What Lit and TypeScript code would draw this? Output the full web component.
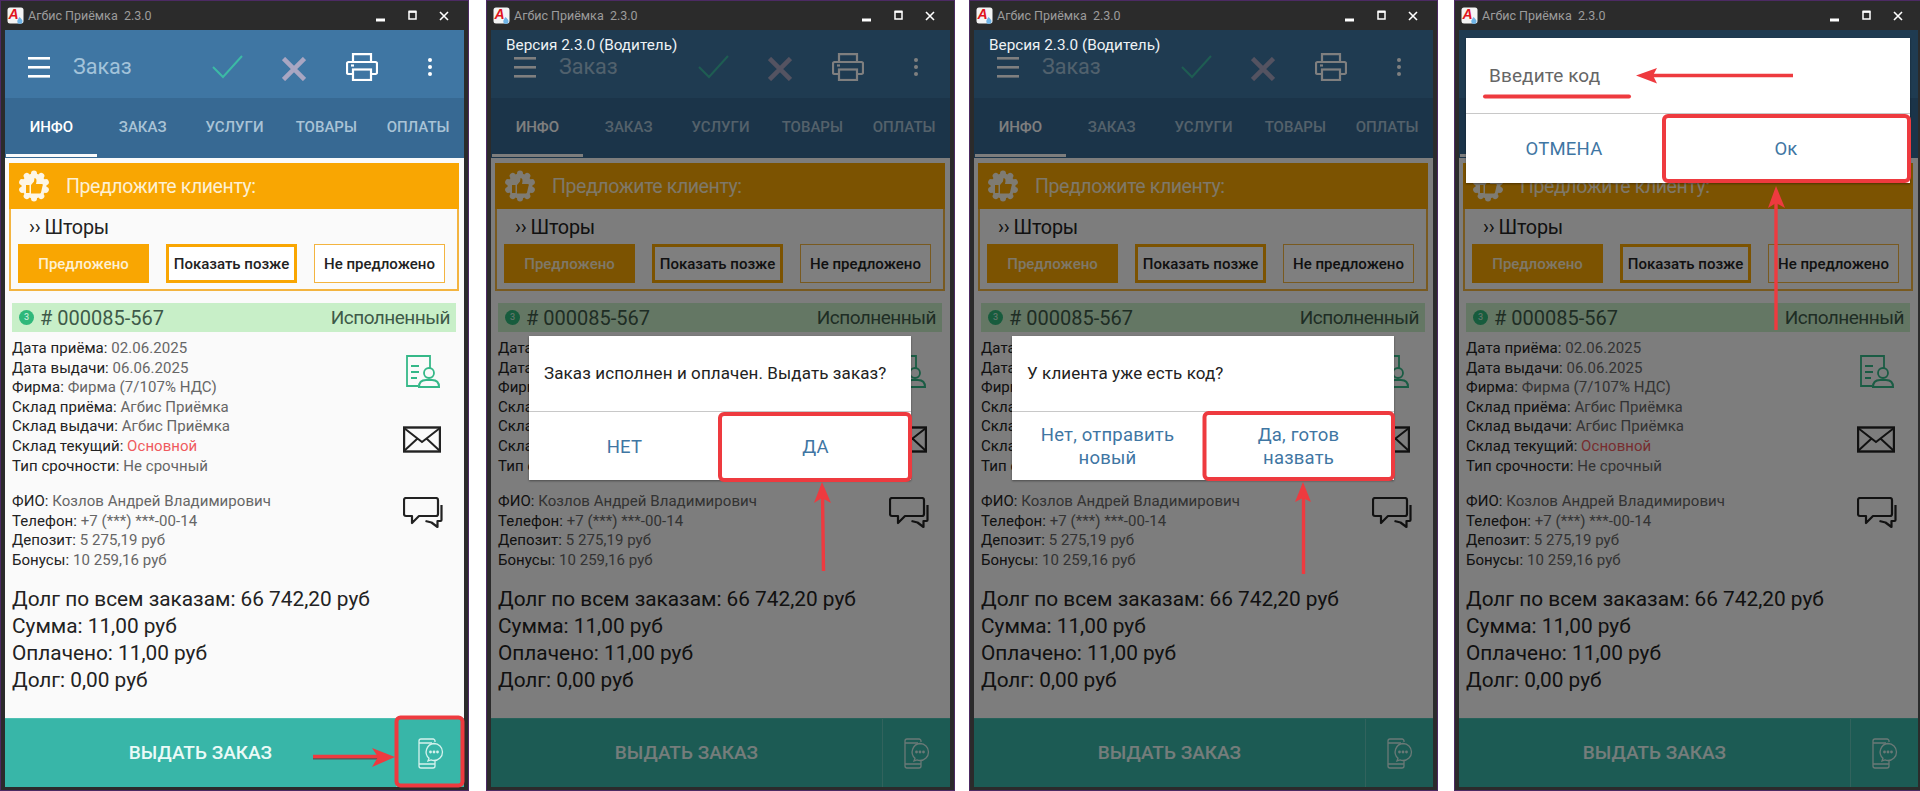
import { LitElement, html, css, svg, nothing } from "lit";
import { customElement, property } from "lit/decorators.js";

const RED = "#ee3a3f";
const frame = (x: number, y: number, w: number, h: number) =>
  svg`<rect x=${x} y=${y} width=${w} height=${h} rx="4" fill="none" stroke=${RED} stroke-width="4"/>`;
const shaft = (x1: number, y1: number, x2: number, y2: number) =>
  svg`<line x1=${x1} y1=${y1} x2=${x2} y2=${y2} stroke=${RED} stroke-width="3.4"/>`;
const head = (pts: string) => svg`<polygon points=${pts} fill=${RED}/>`;

const ANNOTATIONS: Record<string, unknown> = {
  a: svg`${frame(396.5, 717.5, 66, 68)}
    <line x1="313" y1="758" x2="380" y2="758" stroke="#555" stroke-width="3"/>
    ${shaft(313, 756.5, 380, 756.5)}${head("395,757 372,748 378,757 372,767")}`,
  b: svg`${frame(234, 414, 190, 66)}
    ${shaft(337.5, 571, 336.5, 495)}${head("336,482 328,503 336,498 345,503")}`,
  c: svg`${frame(235.5, 413, 188.5, 66)}
    ${shaft(334.5, 574, 334.5, 495)}${head("334,482 326,502 334,498 342,502")}`,
  d: svg`${frame(210, 116, 245, 65)}
    ${shaft(322, 330, 322, 200)}${head("322,186 314,208 322,203 331,208")}
    ${shaft(339, 75.5, 198, 75.5)}${head("182,75.5 203,68 199,75.5 203,83.5")}
    <line x1="31" y1="96.5" x2="175" y2="96.5" stroke=${RED} stroke-width="4" stroke-linecap="round"/>`,
};

@customElement("app-window")
class AppWindow extends LitElement {
  @property() variant = "a";

  static styles = css`
    :host { display: block; width: 469px; height: 791px; }
    * { box-sizing: border-box; }
    .win {
      position: relative; width: 469px; height: 791px; overflow: hidden;
      background: #2b2b2b; border: 1px solid #4c2a63; padding: 0 4px 3px;
      font-family: Roboto, "Noto Sans", sans-serif; display: flex; flex-direction: column;
    }
    .title { height: 29px; display: flex; align-items: center; color: #9c9c9c; font: 12.5px Roboto, sans-serif; margin: 0 -4px; padding: 0 10px 0 6px; }
    .logo { width: 17px; height: 17px; margin-right: 4px; flex: none; }
    .title span { flex: 1; white-space: pre; }
    .ctrl { flex: none; }
    .app { position: relative; flex: 1; display: flex; flex-direction: column; min-height: 0; background: #fafafa; }
    .bar { height: 68px; background: #3f76a3; display: flex; align-items: center; flex: none; position: relative; padding-top: 6px; }
    .bar svg { display: block; flex: none; }
    .burger { margin-left: 23px; }
    .bar h1 { font: 400 21.5px Roboto, sans-serif; color: #a3c3da; margin: 0 0 2px 23px; width: 139px; }
    .x { margin: 3px 0 0 39px; }
    .printer { margin-left: 40px; }
    .kebab { margin-left: 49px; }
    .tabs { height: 60px; background: #376993; display: grid; grid-template-columns: repeat(5, 1fr); flex: none; padding-bottom: 1px; }
    .tab { display: flex; align-items: center; justify-content: center; font: 500 15px Roboto, sans-serif; color: #a9c3d6; padding-top: 1px; border-bottom: 3px solid transparent; }
    .tab.on { color: #fff; border-bottom-color: #fafafa; margin-left: 1px; }
    .content { flex: 1; min-height: 0; padding: 5px 5px 0 4px; color: #222; }
    .offer { height: 128px; border: 2px solid #f3b440; display: flex; flex-direction: column; }
    .offer-head { height: 46px; margin: -2px -2px 0; background: #f9a602; display: flex; align-items: center; color: #fdf0d3; font-size: 19.5px; letter-spacing: -.4px; padding-left: 9px; flex: none; }
    .offer-head svg { margin-right: 16px; }
    .offer-item { font-size: 19.8px; letter-spacing: -.2px; color: #222; margin: 2px 0 0 18px; height: 33px; display: flex; align-items: center; }
    .offer-item i { font-style: normal; margin-right: 4px; }
    .btns { display: grid; grid-template-columns: repeat(3, 131px); gap: 17px; margin-left: 7px; }
    .btn { height: 39px; display: flex; align-items: center; justify-content: center; font: 500 15px Roboto, sans-serif; color: #222; white-space: nowrap; }
    .btn.fill { background: #f9a602; color: #fdf0d3; }
    .btn.thick { border: 3px solid #f9a602; background: #fff; }
    .btn.thin { border: 1px solid #f3b440; background: #fff; }
    .status { margin: 12px 3px 0 3px; height: 29px; background: #c8efc8; display: flex; align-items: center; padding: 0 6px 0 7px; font-size: 20px; color: #3e5a48; }
    .num { width: 15px; height: 15px; border-radius: 50%; background: #2fb87a; margin-right: 6px; color: #bfe8d4; font: 500 9px/15px Roboto, sans-serif; text-align: center; flex: none; }
    .status b { font-weight: 400; flex: 1; }
    .status em { font-style: normal; font-size: 19px; letter-spacing: -.5px; }
    .details { display: flex; margin: 7px 0 0 3px; }
    .rows { flex: 1; }
    .rows p { margin: 0; height: 19.6px; line-height: 19.6px; font-size: 15px; color: #222; white-space: nowrap; letter-spacing: .05px; }
    .rows p span { color: #666; }
    .rows p span.red { color: #ef5a5e; }
    .gap { height: 16px; }
    .icons { width: 73px; flex: none; display: flex; flex-direction: column; }
    .icons svg { display: block; }
    .i1 { margin: 16px 0 0 20px; }
    .i2 { margin: 38px 0 0 17px; }
    .i3 { margin: 44px 0 0 17px; }
    .debt { margin: 15px 0 0 3px; }
    .debt p { margin: 0; height: 27px; line-height: 27px; font-size: 20.8px; color: #222; white-space: nowrap; }
    .foot { height: 69px; background: #38b6a8; display: flex; flex: none; border-top: 1px solid #4fc0b3; }
    .foot .go { flex: 1; display: flex; align-items: center; justify-content: center; color: #eafaf7; font: 500 19px Roboto, sans-serif; padding-bottom: 2px; }
    .foot .ph { width: 68px; border-left: 1px solid rgba(255,255,255,.22); display: flex; align-items: center; justify-content: center; padding-top: 1px; }
    .dim { position: absolute; inset: 0; background: rgba(0,0,0,.5); display: flex; flex-direction: column; align-items: flex-start; }
    .ver { position: absolute; left: 15px; top: 5px; color: #eef2f5; font-size: 15.3px; line-height: 20px; white-space: nowrap; }
    .dialog { background: #fff; display: flex; flex-direction: column; box-shadow: 0 1px 2px rgba(0,0,0,.4); }
    .dialog.mid { width: 382px; height: 144px; margin: 306px 0 0 38px; }
    .dialog.top { width: 444px; height: 145px; margin: 8px 0 0 7px; }
    .msg { height: 76px; flex: none; border-bottom: 1px solid #c8c8c8; padding: 0 15px; display: flex; align-items: center; font-size: 17px; color: #222; letter-spacing: .1px; padding-bottom: 1px; }
    .msg.input { color: #666; font-size: 19px; padding: 0 0 0 23px; }
    .acts { flex: 1; display: grid; grid-template-columns: 1fr 1fr; }
    .acts.wide { grid-template-columns: 196px 248px; }
    .act { display: flex; align-items: center; justify-content: center; text-align: center; color: #3f76a3; font-size: 18.5px; line-height: 23px; letter-spacing: .2px; padding-top: 2px; }
    .notes { position: absolute; left: -1px; top: -1px; pointer-events: none; }
  `;

  private dialog() {
    if (this.variant === "b")
      return html`<div class="ver">Версия 2.3.0 (Водитель)</div>
        <div class="dialog mid"><div class="msg">Заказ исполнен и оплачен. Выдать заказ?</div>
        <div class="acts"><div class="act">НЕТ</div><div class="act">ДА</div></div></div>`;
    if (this.variant === "c")
      return html`<div class="ver">Версия 2.3.0 (Водитель)</div>
        <div class="dialog mid"><div class="msg">У клиента уже есть код?</div>
        <div class="acts"><div class="act">Нет, отправить<br />новый</div><div class="act">Да, готов<br />назвать</div></div></div>`;
    return html`<div class="dialog top"><div class="msg input">Введите код</div>
      <div class="acts wide"><div class="act">ОТМЕНА</div><div class="act">Ок</div></div></div>`;
  }

  render() {
    return html`<div class="win">
      <div class="title">
        <svg class="logo" viewBox="0 0 17 17"><rect x=".5" y=".5" width="16" height="16" rx="2.5" fill="#f4f4f4"/><text x="1.5" y="12" font-family="Liberation Sans" font-weight="700" font-style="italic" font-size="14" fill="#e0141c">A</text><path d="M12.5 10c2 2 3 3 3 4.3a2.6 2.6 0 0 1-5.2 0c0-1.300 1-2.300 2.200-4.300z" fill="#6fb4e6"/></svg>
        <span>Агбис Приёмка  2.3.0</span>
        <svg class="ctrl" width="82" height="12" viewBox="0 0 82 12" fill="none" stroke="#fff"><path d="M0 10h9" stroke-width="3"/><rect x="33" y="2" width="7" height="7" stroke-width="1.500"/><path d="M32.500 1.500h8" stroke-width="2"/><path d="M64 2l8 8M72 2l-8 8" stroke-width="1.600"/></svg>
      </div>
      <div class="app">
        <div class="bar">
          <svg class="burger" width="22" height="22" viewBox="0 0 22 22" fill="#fff"><rect y="1" width="22" height="2.600"/><rect y="10" width="22" height="2.600"/><rect y="19" width="22" height="2.600"/></svg>
          <h1>Заказ</h1>
          <svg class="check" width="31" height="24" viewBox="0 0 31 24" fill="none" stroke="#3cbaa5" stroke-width="2"><path d="M1 12l10 10L30 1"/></svg>
          <svg class="x" width="24" height="24" viewBox="0 0 24 24" stroke="#a9a6c2" stroke-width="4.600"><path d="M1.500 1.500l21 21M22.500 1.500l-21 21"/></svg>
          <svg class="printer" width="32" height="28" viewBox="0 0 32 28" fill="none" stroke="#fff" stroke-width="2.200"><path d="M7 9V1.200h18V9"/><path d="M7 21H2.500A1.500 1.500 0 0 1 1 19.500V10.500A1.500 1.500 0 0 1 2.500 9h27a1.500 1.500 0 0 1 1.500 1.500v9a1.500 1.500 0 0 1-1.500 1.500H25"/><rect x="7" y="16.500" width="18" height="10.500"/><path d="M5 12.500h3"/></svg>
          <svg class="kebab" width="6" height="20" viewBox="0 0 6 20" fill="#fff"><circle cx="3" cy="3" r="2"/><circle cx="3" cy="10" r="2"/><circle cx="3" cy="17" r="2"/></svg>
        </div>
        <div class="tabs"><div class="tab on">ИНФО</div><div class="tab">ЗАКАЗ</div><div class="tab">УСЛУГИ</div><div class="tab">ТОВАРЫ</div><div class="tab">ОПЛАТЫ</div></div>
        <div class="content">
          <div class="offer">
            <div class="offer-head">
              <svg width="32" height="32" viewBox="0 0 32 32"><g fill="#fdf6e6"><circle cx="16" cy="16" r="12.500"/>${[0, 36, 72, 108, 144, 180, 216, 252, 288, 324].map((a) => svg`<circle cx="16" cy="3.500" r="3" transform="rotate(${a} 16 16)"/>`)}</g><path d="M8 15h3.500v8H8zM13 15l3-3.500.5-3.500c2 0 2.500 2 1.500 6h6c1 0 1 1.500.5 2l-1.500 6.500c-.2.800-.8 1-1.500 1H13z" fill="#f9a602"/></svg>
              Предложите клиенту:
            </div>
            <div class="offer-item"><i>››</i>Шторы</div>
            <div class="btns"><div class="btn fill">Предложено</div><div class="btn thick">Показать позже</div><div class="btn thin">Не предложено</div></div>
          </div>
          <div class="status"><div class="num">3</div><b># 000085-567</b><em>Исполненный</em></div>
          <div class="details">
            <div class="rows">
              <p>Дата приёма: <span>02.06.2025</span></p>
              <p>Дата выдачи: <span>06.06.2025</span></p>
              <p>Фирма: <span>Фирма (7/107% НДС)</span></p>
              <p>Склад приёма: <span>Агбис Приёмка</span></p>
              <p>Склад выдачи: <span>Агбис Приёмка</span></p>
              <p>Склад текущий: <span class="red">Основной</span></p>
              <p>Тип срочности: <span>Не срочный</span></p>
              <div class="gap"></div>
              <p>ФИО: <span>Козлов Андрей Владимирович</span></p>
              <p>Телефон: <span>+7 (***) ***-00-14</span></p>
              <p>Депозит: <span>5 275,19 руб</span></p>
              <p>Бонусы: <span>10 259,16 руб</span></p>
            </div>
            <div class="icons">
              <svg class="i1" width="36" height="33" viewBox="0 0 36 33" fill="none" stroke="#35b888" stroke-width="1.800"><path d="M24 13V1H1v30h11"/><path d="M5 11h8M5 17h8M5 23h6"/><circle cx="23" cy="18" r="5"/><path d="M13 32c0-5 3-7 7-7h6c4 0 7 2 7 7z" stroke-width="2"/></svg>
              <svg class="i2" width="38" height="27" viewBox="0 0 38 27" fill="none" stroke="#222" stroke-width="2"><rect x="1" y="1.500" width="36" height="24" stroke-width="2.400"/><path d="M1 2l18 14L37 2M1 25l13-12M37 25L24 13"/></svg>
              <svg class="i3" width="40" height="33" viewBox="0 0 40 33" fill="none" stroke="#222" stroke-width="2.200" stroke-linejoin="round"><path d="M3 1h30a2 2 0 0 1 2 2v14a2 2 0 0 1-2 2H16l-7 7v-7H3a2 2 0 0 1-2-2V3a2 2 0 0 1 2-2z"/><path d="M38.500 8v15a1 1 0 0 1-1 1h-3v6l-6-4.500-6-1.500"/></svg>
            </div>
          </div>
          <div class="debt">
            <p>Долг по всем заказам: 66 742,20 руб</p>
            <p>Сумма: 11,00 руб</p>
            <p>Оплачено: 11,00 руб</p>
            <p>Долг: 0,00 руб</p>
          </div>
        </div>
        <div class="foot">
          <div class="go">ВЫДАТЬ ЗАКАЗ</div>
          <div class="ph"><svg width="26" height="31" viewBox="0 0 26 31" fill="none" stroke="#d5f2ed" stroke-width="1.300"><path d="M17 4V3a2 2 0 0 0-2-2H3a2 2 0 0 0-2 2v25a2 2 0 0 0 2 2h12a2 2 0 0 0 2-2v-5"/><path d="M1 5h13M1 26h16"/><path d="M16 5.500a8.500 8.500 0 0 1 0 17c-1 0-2-.2-3-.6l-3 1 1-2.600a8.500 8.500 0 0 1 5-14.800z" fill="#38b6a8"/><g fill="#d5f2ed" stroke="none"><circle cx="12.500" cy="14" r="1.400"/><circle cx="16" cy="14" r="1.400"/><circle cx="19.500" cy="14" r="1.400"/></g></svg></div>
        </div>
        ${this.variant === "a" ? nothing : html`<div class="dim">${this.dialog()}</div>`}
      </div>
      <svg class="notes" width="469" height="791" viewBox="0 0 469 791">${ANNOTATIONS[this.variant]}</svg>
    </div>`;
  }
}

@customElement("app-root")
class AppRoot extends LitElement {
  static styles = css`
    :host { display: block; width: 1920px; height: 791px; overflow: hidden; background: #fff; }
    .row { display: grid; grid-template-columns: 486px 483px 485px 469px; }
  `;
  render() {
    return html`<div class="row">
      <app-window variant="a"></app-window>
      <app-window variant="b"></app-window>
      <app-window variant="c"></app-window>
      <app-window variant="d"></app-window>
    </div>`;
  }
}
